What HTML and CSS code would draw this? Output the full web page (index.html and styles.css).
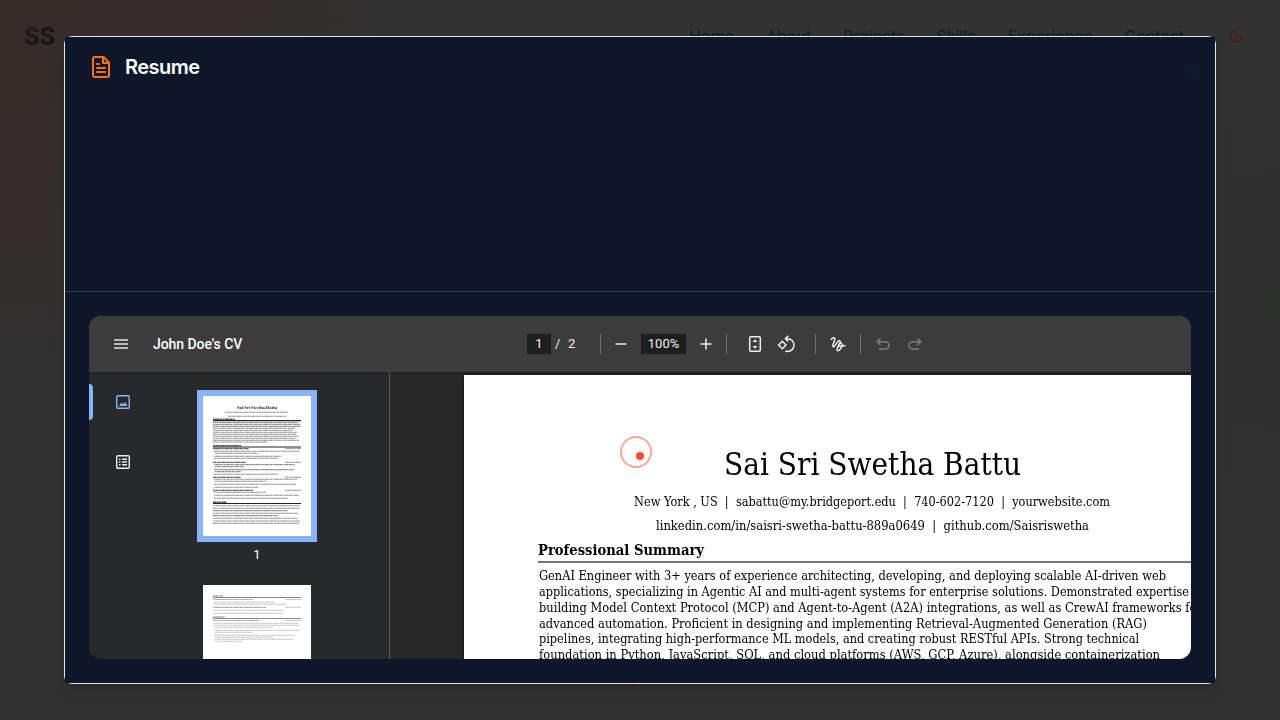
FILE: index.html
```html
<!DOCTYPE html>
<html lang="en">
<head>
<meta charset="utf-8">
<title>Resume</title>
<link rel="stylesheet" href="styles.css">
</head>
<body>
<header class="site-header">
  <div class="brand"><span class="brand-accent">S</span>S</div>
  <nav class="nav"><a>Home</a><a>About</a><a>Projects</a><a>Skills</a><a>Experience</a><a>Contact</a></nav>
  <svg class="moon" viewBox="0 0 24 24"><path d="M12 3a6 6 0 0 0 9 9 9 9 0 1 1-9-9Z"/></svg>
</header>
<i class="page-dot"></i>

<section class="modal">
  <div class="modal-head">
    <svg class="file-icon" viewBox="0 0 24 24"><path d="M14.5 2H6a2 2 0 0 0-2 2v16a2 2 0 0 0 2 2h12a2 2 0 0 0 2-2V7.500z"/><path d="M14 2v6h6M10 9H8M16 13H8M16 17H8"/></svg>
    <h2>Resume</h2>
    <svg class="close" viewBox="0 0 8 8"><path d="M1 1l6 6M7 1L1 7"/></svg>
  </div>
  <div class="modal-body">
    <div class="viewer">
      <div class="toolbar">
        <div class="tb-left">
          <svg class="menu" viewBox="0 0 14 10"><path d="M0 1h14M0 5h14M0 9h14"/></svg>
          <span class="doc-title">John Doe's CV</span>
        </div>
        <div class="tb-mid">
          <span class="box page-no">1</span><span class="slash">/</span><span class="total">2</span>
          <i class="sep sep-a"></i>
          <svg class="ico minus" viewBox="0 0 20 20"><path d="M4.500 10h11"/></svg>
          <span class="box zoom-box">100%</span>
          <svg class="ico plus" viewBox="0 0 20 20"><path d="M4.500 10h11M10 4.500v11"/></svg>
          <i class="sep sep-b"></i>
          <svg class="ico fit" viewBox="0 0 20 20"><rect x="4.700" y="2.700" width="10.600" height="14.600" rx="1"/><path class="solid" d="M7.600 8L10 5.300 12.400 8zM7.600 12h4.800L10 14.700z"/></svg>
          <svg class="ico rotate" viewBox="0 0 20 20"><path d="M5.300 7.300L9 11l-3.700 3.700L1.600 11zM8.600 4.700h2a6.400 6.400 0 0 1 0 12.800q-1.200 0-2.300-.500M11.200 1.900L8.400 4.700l2.800 2.800"/></svg>
          <i class="sep sep-c"></i>
          <svg class="ico pen" viewBox="0 0 20 20"><path d="M3 5.800C4 4.200 6 3 6.800 4.300 7.800 6 3.800 10.800 5 12.500 6.600 14.500 9.500 5.800 11.700 6.600 14 7.600 7.600 14.500 9.200 16.400 10.900 18.200 15 12 14 10 12.900 8.400 9.700 10.400 10.800 11.900 11.800 13 14.500 11.400 17.500 11.400"/></svg>
          <i class="sep sep-d"></i>
          <svg class="ico undo dim" viewBox="0 0 20 20"><path d="M7.500 4.500L4.300 7.700l3.200 3.200M4.500 7.700h7.900a3.600 3.600 0 0 1 0 7.300H6"/></svg>
          <svg class="ico redo dim" viewBox="0 0 20 20"><path d="M12.500 4.500l3.200 3.200-3.200 3.200M15.500 7.700H7.600a3.600 3.600 0 0 0 0 7.300H14"/></svg>
        </div>
      </div>
      <div class="workspace">
        <aside class="sidebar">
          <div class="rail">
            <div class="rail-item selected"><svg viewBox="0 0 14 14"><rect x=".75" y=".75" width="12.500" height="12.500" rx="1"/><path class="solid" d="M3 11l2.500-3.500 1.700 2L9 7l2.500 4z"/></svg></div>
            <div class="rail-item"><svg viewBox="0 0 14 14"><rect x=".75" y=".75" width="12.500" height="12.500" rx="1"/><path d="M3 4.200h1.500M6 4.200h5M3 7h1.500M6 7h5M3 9.800h1.500M6 9.800h5"/></svg></div>
          </div>
          <div class="thumbs">
            <div class="thumb active"><svg class="mini" id="mini1" viewBox="0 0 108 140"><text x="54" y="13.200" text-anchor="middle" textLength="40">Sai Sri Swetha Battu</text></svg></div>
            <div class="thumb-label">1</div>
            <div class="thumb second"><svg class="mini faint" id="mini2" viewBox="0 0 108 140"></svg></div>
          </div>
        </aside>
        <main class="canvas">
          <article class="paper">
            <h1><span class="fit-line" data-width="297">Sai Sri Swetha Battu</span></h1>
            <p class="contact"><span class="fit-line" data-width="476">New York , US&nbsp; |&nbsp; sabattu@my.bridgeport.edu&nbsp; |&nbsp; 740-602-7120&nbsp; |&nbsp; yourwebsite.com</span></p>
            <p class="contact"><span class="fit-line" data-width="433">linkedin.com/in/saisri-swetha-battu-889a0649&nbsp; |&nbsp; github.com/Saisriswetha</span></p>
            <h3><span class="fit-line" data-width="166">Professional Summary</span></h3>
            <div class="summary">
              <div><span class="fit-line" data-width="627">GenAI Engineer with 3+ years of experience architecting, developing, and deploying scalable AI-driven web</span></div>
              <div><span class="fit-line" data-width="650">applications, specializing in Agentic AI and multi-agent systems for enterprise solutions. Demonstrated expertise</span></div>
              <div><span class="fit-line" data-width="663">building Model Context Protocol (MCP) and Agent-to-Agent (A2A) integrations, as well as CrewAI frameworks for</span></div>
              <div><span class="fit-line" data-width="608">advanced automation. Proficient in designing and implementing Retrieval-Augmented Generation (RAG)</span></div>
              <div><span class="fit-line" data-width="600">pipelines, integrating high-performance ML models, and creating robust RESTful APIs. Strong technical</span></div>
              <div><span class="fit-line" data-width="621">foundation in Python, JavaScript, SQL, and cloud platforms (AWS, GCP, Azure), alongside containerization</span></div>
            </div>
          </article>
        </main>
      </div>
    </div>
  </div>
</section>
<i class="ring"></i><i class="dot"></i>
<script src="viewer.js"></script>
</body>
</html>
```
FILE: styles.css
```css
* { box-sizing: border-box; }
body {
  margin: 0; width: 1280px; height: 720px; overflow: hidden;
  font-family: Inter, sans-serif;
  background:
    radial-gradient(ellipse 420px 330px at 0 40px, #372b2a 0 20%, rgba(50,46,44,0) 100%),
    radial-gradient(ellipse 350px 330px at 1280px 300px, #2f312f, rgba(50,50,50,0)),
    #323232;
}
.site-header { display: flex; align-items: center; height: 72px; padding: 0 36px 0 24px; }
.brand { font-size: 24px; font-weight: 700; color: #14181b; letter-spacing: -.2px; }
.brand-accent { background: linear-gradient(135deg, #401a18, #171719 60%); -webkit-background-clip: text; background-clip: text; color: transparent; }
.nav { display: flex; gap: 32px; margin-left: auto; font-size: 16px; color: #14191f; }
.moon { width: 16px; height: 16px; margin-left: 44px; fill: none; stroke: #55180f; stroke-width: 2; stroke-linecap: round; stroke-linejoin: round; }
.page-dot { position: absolute; left: 630px; top: 680px; width: 6px; height: 6px; border-radius: 50%; background: #501b14; }

.modal {
  position: absolute; left: 64px; top: 36px; width: 1152px; height: 648px;
  border: 1px solid #e5e7eb; border-radius: 8px;
  box-shadow: 0 10px 15px -3px rgba(0,0,0,.15), 0 4px 6px -4px rgba(0,0,0,.15);
  display: flex; flex-direction: column;
}
.modal-head { height: 255px; background: #0f172a; border-bottom: 1px solid #303c50; padding: 18px 20px 0 24px; display: flex; align-items: flex-start; }
.file-icon { width: 24px; height: 24px; fill: none; stroke: #f97316; stroke-width: 2; stroke-linecap: round; stroke-linejoin: round; }
.modal-head h2 { margin: 0 0 0 12px; font-size: 20px; line-height: 24px; font-weight: 600; letter-spacing: -.5px; color: #fff; }
.close { width: 8px; height: 8px; margin: 14px 0 0 auto; stroke: #10202f; }
.modal-body { flex: 1; background: #0f172a; padding: 24px; min-height: 0; }
.viewer { height: 343px; border-radius: 12px; overflow: hidden; display: flex; flex-direction: column; background: #282828; font-family: Roboto, sans-serif; }

.toolbar { height: 56px; flex: none; display: flex; align-items: center; background: #3c3c3c; box-shadow: 0 1px 2px rgba(0,0,0,.3); z-index: 1; color: #f1f1f1; }
.tb-left { width: 438px; display: flex; align-items: center; padding-left: 25px; }
.menu { width: 14px; height: 10px; stroke: #e6e6e6; stroke-width: 1.500; }
.doc-title { margin-left: 25px; font-size: 14px; font-weight: 500; letter-spacing: -.05px; color: #fff; }
.tb-mid { display: flex; align-items: center; font-size: 13px; line-height: 20px; }
.box { height: 20px; line-height: 20px; background: #1e1e1e; text-align: center; }
.page-no { width: 24px; }
.slash { margin-left: 4px; width: 13px; }
.total { width: 9px; }
.sep { width: 1px; height: 20px; background: #727272; }
.sep-a { margin: 0 10px 0 23px; }
.zoom-box { width: 45px; margin: 0 10px; }
.sep-b { margin: 0 18px 0 10px; }
.sep-c { margin: 0 12px 0 18px; }
.sep-d { margin: 0 12px 0 12px; }
.ico { width: 20px; height: 20px; fill: none; stroke: #ededed; stroke-width: 1.500; }
.ico .solid { fill: #ededed; stroke: none; }
.rotate { margin-left: 12px; }
.redo { margin-left: 12px; }
.ico.dim { stroke: #7c7c7c; }

.workspace { flex: 1; display: flex; min-height: 0; }
.sidebar { width: 301px; display: flex; background: #28292a; border-right: 1px solid #5a5a5a; }
.rail { width: 68px; padding-top: 12px; display: flex; flex-direction: column; gap: 24px; }
.rail-item { height: 36px; display: flex; align-items: center; padding-left: 27px; }
.rail-item svg { width: 14px; height: 14px; fill: none; stroke: #ededed; stroke-width: 1.400; }
.rail-item.selected { padding-left: 0; gap: 23px; }
.rail-item.selected::before { content: ""; width: 4px; height: 36px; background: #8ab4f8; border-radius: 0 4px 4px 0; }
.rail-item.selected svg { stroke: #8ab4f8; }
.rail-item.selected .solid { fill: #8ab4f8; stroke: none; }
.thumbs { width: 200px; padding-top: 18px; display: flex; flex-direction: column; align-items: center; }
.thumb { width: 108px; height: 140px; flex: none; background: #fff; }
.thumb.active { width: 120px; height: 152px; border: 6px solid #8ab4f8; }
.mini { display: block; width: 108px; height: 140px; fill: none; stroke: #222; filter: blur(.4px); }
.mini text { font: bold 4.700px "Liberation Serif", serif; fill: #222; stroke: none; }
.mini.faint { stroke: #888; }
.thumb-label { flex: none; height: 43px; padding-top: 4px; line-height: 18px; font-size: 13px; color: #fff; }

.canvas { flex: 1; min-width: 0; overflow: hidden; padding: 3px 0 0 74px; }
.paper { width: 816px; height: 1056px; background: #fff; color: #000; padding: 67px 0 0 74px; font-family: "DejaVu Serif", serif; font-stretch: normal; box-shadow: 0 0 3px rgba(0,0,0,.6); }
.paper h1 { margin: 0 0 4px; width: 668px; text-align: center; font-weight: 400; font-size: 31px; line-height: 44px; }
.contact { margin: 0; width: 668px; text-align: center; font-size: 12.500px; line-height: 24px; }
.paper h3 { margin: 0; height: 25px; font-size: 14.500px; line-height: 24px; font-weight: 700; width: 668px; border-bottom: 2px solid #777; }
.summary { padding: 5px 0 0 1px; font-size: 12.500px; line-height: 15.850px; }
.summary > div { height: 15.850px; }
.fit-line { display: inline-block; white-space: nowrap; text-align: left; transform-origin: 0 50%; }

.ring { position: absolute; left: 620px; top: 436px; width: 32px; height: 32px; border: 2px solid rgba(255,77,41,.5); border-radius: 50%; }
.dot { position: absolute; left: 636px; top: 452px; width: 8px; height: 8px; border-radius: 50%; background: #ff4d29; }
```
FILE: viewer.js
```js
// Stretch each text line to its typeset width.
document.querySelectorAll('.fit-line').forEach(function (el) {
  var target = Number(el.dataset.width);
  var natural = el.getBoundingClientRect().width;
  el.style.width = target + 'px';
  el.style.transform = 'scaleX(' + target / natural + ')';
});

// Miniature page lines: [y, startX, endX, kind]
var dashes = ['2 .4 3.2 .4 1.400 .4 4 .4', '3.500 .4 1.200 .4 2.500 .4 5 .5', '1.500 .4 4.200 .4 2.800 .5'];
function line(svg, y, x1, x2, w, o, dash) {
  var p = document.createElementNS('http://www.w3.org/2000/svg', 'path');
  p.setAttribute('d', 'M' + x1 + ' ' + y + 'H' + x2);
  p.setAttribute('stroke-width', w);
  p.setAttribute('stroke-opacity', o);
  if (dash) p.setAttribute('stroke-dasharray', dash);
  svg.appendChild(p);
}
function draw(id, rows) {
  var svg = document.getElementById(id);
  rows.forEach(function (r, i) {
    var k = r[3], d = dashes[i % 3];
    if (k === 'rule') line(svg, r[0], r[1], r[2], 1.2, 1);
    else if (k === 'bold') { line(svg, r[0], r[1], r[2], 1.2, .7, d); line(svg, r[0], 82, 98, 1, .5, d); }
    else if (k === 'head') line(svg, r[0], r[1], r[2], 1.4, .75, d);
    else line(svg, r[0], r[1], r[2], 1.1, .5, d);
  });
}
draw('mini1', [
  [16.3,22,85],[20.3,25,83],[23.2,10,32,'head'],[24.6,10,98,'rule'],
  [26.5,10,95],[28.4,10,97],[30.4,10,98],[32.3,10,92],[34.3,10,90],[36.2,10,94],[38.200,10,93],[40.200,10,96],[42.2,10,92],[44.200,10,96],[46,10,64],
  [49.7,10,38,'head'],[51,10,98,'rule'],[52.6,10,46,'bold'],[55.3,11,97],[57.3,12,55],[60.3,11,78],[62.3,11,75],
  [66.3,10,43,'bold'],[68.6,11,92],[70.6,12,41],[73.6,11,91],[75.6,12,38],[78.3,11,75],
  [81.3,10,38,'bold'],[83.3,11,94],[85.3,12,63],[88.3,11,93],[91.3,11,55],
  [94.3,10,50,'bold'],[96.3,11,63],[99.3,11,96],[102.3,11,85],
  [106.2,10,24,'head'],[107.5,10,98,'rule'],[109.7,10,97],[112.3,10,96],[114.6,10,84],[117.3,10,95],[119.6,10,75],[122.3,10,95],[125,10,97],[127.3,10,96]
]);
draw('mini2', [
  [11,10,20,'head'],[12.5,10,98,'rule'],[14.5,10,50,'bold'],[17.3,11,72],[19.3,11,83],[22.3,10,63,'bold'],[25.3,11,81],[28.3,11,80],
  [32,10,22,'head'],[33.5,10,98,'rule'],[35.5,10,57,'bold'],[38.2,11,95],[40.3,11,97],[42.3,12,70],[45.3,11,97],[47.3,12,50],[50.3,11,91],[52.3,12,70],[54.3,11,90],[56.3,12,40]
]);
```
